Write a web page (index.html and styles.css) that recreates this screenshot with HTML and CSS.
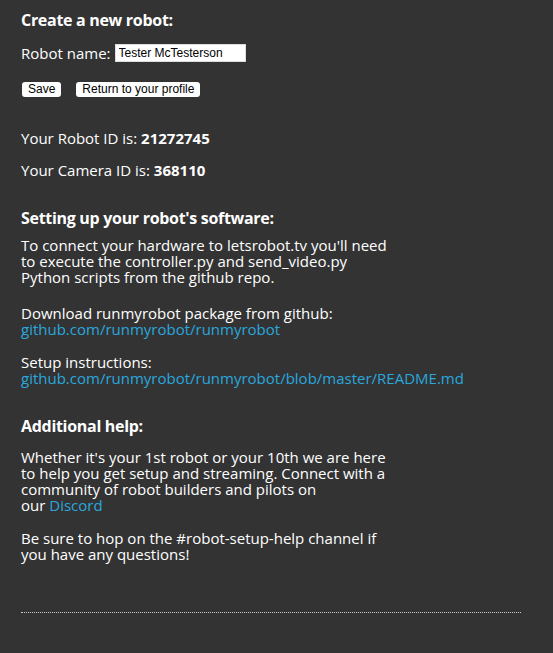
FILE: index.html
```html
<!DOCTYPE html>
<html>
<head>
<meta charset="utf-8">
<link rel="stylesheet" href="styles.css">
</head>
<body>
<div class="page">
  <h3 class="title">Create a new robot:</h3>
  <div class="name-row">
    <label class="label">Robot name:</label>
    <input class="name-input" type="text" value="Tester McTesterson">
  </div>
  <div class="buttons">
    <button class="btn">Save</button>
    <button class="btn">Return to your profile</button>
  </div>
  <div class="id-line id-robot">Your Robot ID is: <b>21272745</b></div>
  <div class="id-line id-camera">Your Camera ID is: <b>368110</b></div>

  <h3 class="section">Setting up your robot's software:</h3>
  <p class="para p1">To connect your hardware to letsrobot.tv you'll need<br>to execute the controller.py and send_video.py<br>Python scripts from the github repo.</p>
  <p class="para p2">Download runmyrobot package from github:<br><a class="link" href="#">github.com/runmyrobot/runmyrobot</a></p>
  <p class="para p3">Setup instructions:<br><a class="link" href="#">github.com/runmyrobot/runmyrobot/blob/master/README.md</a></p>

  <h3 class="section help">Additional help:</h3>
  <p class="para p4">Whether it's your 1st robot or your 10th we are here<br>to help you get setup and streaming. Connect with a<br>community of robot builders and pilots on<br>our <a class="link" href="#">Discord</a></p>
  <p class="para p5">Be sure to hop on the #robot-setup-help channel if<br>you have any questions!</p>

  <hr class="rule">
</div>
</body>
</html>
```
FILE: styles.css
```css
html, body {
  margin: 0;
  padding: 0;
  background: #333333;
}
.page {
  padding: 10px 0 40px 21px;
  color: #ffffff;
  font-family: "Open Sans", "Noto Sans", sans-serif;
  font-size: 15px;
  line-height: 16px;
  white-space: nowrap;
}
.title {
  margin: 0;
  font-size: 16px;
  line-height: 20px;
  font-weight: 700;
  letter-spacing: -0.3px;
}
.name-row {
  display: flex;
  align-items: center;
  margin-top: 14px;
  height: 18px;
}
.label {
  font-size: 15px;
  margin-right: 4px;
}
.name-input {
  box-sizing: border-box;
  width: 131px;
  height: 18px;
  margin: 0;
  padding: 0 3px;
  border: 1px solid #dddddd;
  background: #ffffff;
  color: #000000;
  font-family: "Liberation Sans", Arial, sans-serif;
  font-size: 12px;
}
.buttons {
  display: flex;
  gap: 15px;
  margin-top: 20px;
  height: 16px;
  padding-left: 1px;
}
.btn {
  box-sizing: border-box;
  height: 15px;
  margin: 0;
  padding: 0 6px;
  border: none;
  border-radius: 3px;
  background: #ffffff;
  color: #000000;
  font-family: "Liberation Sans", Arial, sans-serif;
  font-size: 12px;
  line-height: 15px;
}
.id-line {
  line-height: 20px;
}
.id-robot {
  margin-top: 30px;
}
.id-camera {
  margin-top: 12px;
}
.id-line b {
  font-weight: 700;
}
.section {
  margin: 28px 0 0 0;
  font-size: 16px;
  line-height: 20px;
  font-weight: 700;
  letter-spacing: -0.3px;
}
.section.help {
  margin-top: 30px;
}
.para {
  margin: 16px 0 0 0;
}
.para.p1 {
  margin-top: 9px;
}
.para.p2 {
  margin-top: 20px;
}
.para.p3 {
  margin-top: 17px;
}
.para.p4 {
  margin-top: 13px;
}
.para.p5 {
  margin-top: 17px;
}
.link {
  color: #29a7de;
  text-decoration: none;
}
.rule {
  margin: 50px 0 0 0;
  width: 500px;
  border: none;
  border-top: 1px dotted #cccccc;
  height: 0;
}
```
